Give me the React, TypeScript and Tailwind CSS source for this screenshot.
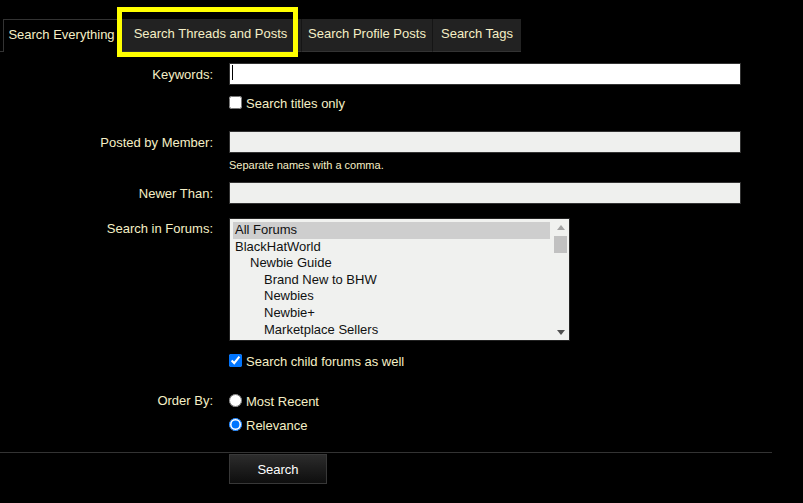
import React, { useState } from "react";

const tabs = [
  { label: "Search Everything", width: "w-[116px]" },
  { label: "Search Threads and Posts", width: "w-[182px]" },
  { label: "Search Profile Posts", width: "w-[131px]" },
  { label: "Search Tags", width: "w-[89px]" },
];

const forums: { name: string; level: number }[] = [
  { name: "All Forums", level: 0 },
  { name: "BlackHatWorld", level: 0 },
  { name: "Newbie Guide", level: 1 },
  { name: "Brand New to BHW", level: 2 },
  { name: "Newbies", level: 2 },
  { name: "Newbie+", level: 2 },
  { name: "Marketplace Sellers", level: 2 },
  { name: "Introductions", level: 1 },
];

const indent: Record<number, string> = {
  0: "pl-[2px]",
  1: "pl-[17px]",
  2: "pl-[31px]",
};

function Row({
  label,
  children,
  className = "",
  labelClass = "",
}: {
  label?: string;
  children: React.ReactNode;
  className?: string;
  labelClass?: string;
}) {
  return (
    <div className={`flex shrink-0 ${className}`}>
      <div className={`w-[213px] shrink-0 text-right ${labelClass}`}>{label}</div>
      <div className="ml-[16px] flex items-center">{children}</div>
    </div>
  );
}

function Arrow({ up, color }: { up?: boolean; color: string }) {
  return (
    <svg width="8" height="5" viewBox="0 0 8 5">
      <polygon points={up ? "0,5 8,5 4,0" : "0,0 8,0 4,5"} fill={color} />
    </svg>
  );
}

function Check({
  type,
  checked,
  onChange,
  text,
  name,
}: {
  type: "checkbox" | "radio";
  checked: boolean;
  onChange: (v: boolean) => void;
  text: string;
  name?: string;
}) {
  return (
    <label className="flex h-[13px] items-center">
      <input
        type={type}
        name={name}
        checked={checked}
        onChange={(e) => onChange(e.target.checked)}
        className="m-0 h-[13px] w-[13px]"
      />
      <span className="ml-[4px] translate-y-[1px] leading-[13px]">{text}</span>
    </label>
  );
}

export default function App() {
  const [active, setActive] = useState(0);
  const [titlesOnly, setTitlesOnly] = useState(false);
  const [childForums, setChildForums] = useState(true);
  const [order, setOrder] = useState("relevance");

  return (
    <div className="min-h-screen bg-black font-['Liberation_Sans',Arial,sans-serif] text-[13px] leading-[15px] text-[#f5efc6]">
      {/* tab strip */}
      <div className="relative flex pt-[19px]">
        <div className="w-[3px] border-b border-[#333]" />
        {tabs.map((tab, i) => (
          <button
            key={tab.label}
            onClick={() => setActive(i)}
            className={`${tab.width} h-[33px] pb-[3px] text-center whitespace-nowrap ${
              i === active
                ? "border-t border-l border-[#333] bg-black"
                : "border-b border-l border-[#333] border-l-[#151515] bg-[#222]"
            }`}
          >
            {tab.label}
          </button>
        ))}
        <div className="pointer-events-none absolute left-[117px] top-[7px] h-[50px] w-[181px] border-[5px] border-[#ffff00]" />
      </div>

      <form className="flex flex-col" onSubmit={(e) => e.preventDefault()}>
        <Row label="Keywords:" className="mt-[11px] h-[22px] items-center">
          <div className="relative">
            <input
              type="text"
              className="block h-[22px] w-[512px] border border-[#333] bg-white px-[2px] text-[13px] text-black outline-none"
            />
            <span className="absolute left-[3px] top-[2px] h-[15px] w-px bg-black" />
          </div>
        </Row>

        <Row className="mt-[11px] h-[13px]">
          <Check type="checkbox" checked={titlesOnly} onChange={setTitlesOnly} text="Search titles only" />
        </Row>

        <Row label="Posted by Member:" className="mt-[22px] h-[22px] items-center">
          <input
            type="text"
            className="block h-[22px] w-[512px] border border-[#333] bg-[#eff0ee] px-[2px] text-[13px] text-black outline-none"
          />
        </Row>
        <Row className="mt-[6px] h-[13px]">
          <span className="text-[11px] leading-[13px]">Separate names with a comma.</span>
        </Row>

        <Row label="Newer Than:" className="mt-[10px] h-[22px] items-center">
          <input
            type="text"
            className="block h-[22px] w-[512px] border border-[#333] bg-[#eff0ee] px-[2px] text-[13px] text-black outline-none"
          />
        </Row>

        <Row label="Search in Forums:" className="mt-[14px] h-[123px]" labelClass="pt-[3px]">
          <div className="flex h-[123px] w-[341px] self-start border border-[#222] bg-[#f0f1ef] text-[#111]">
            <ul className="h-full flex-1 overflow-hidden py-[3px] pl-[3px] pr-[3px]">
              {forums.map((f, i) => (
                <li
                  key={f.name}
                  className={`h-[16.6px] leading-[16.6px] whitespace-nowrap ${indent[f.level]} ${
                    i === 0 ? "bg-[#cecece]" : ""
                  }`}
                >
                  {f.name}
                </li>
              ))}
            </ul>
            <div className="mr-px flex w-[15px] flex-col items-center">
              <div className="flex h-[16px] items-center justify-center">
                <Arrow up color="#a3a3a3" />
              </div>
              <div className="mt-[1px] h-[17px] w-[13px] bg-[#c1c1c1]" />
              <div className="flex-1" />
              <div className="flex h-[16px] items-center justify-center">
                <Arrow color="#505050" />
              </div>
            </div>
          </div>
        </Row>

        <Row className="mt-[13px] h-[13px]">
          <Check type="checkbox" checked={childForums} onChange={setChildForums} text="Search child forums as well" />
        </Row>

        <Row label="Order By:" className="mt-[27px] h-[13px] items-center">
          <Check
            type="radio"
            name="order"
            checked={order === "date"}
            onChange={() => setOrder("date")}
            text="Most Recent"
          />
        </Row>
        <Row className="mt-[11px] h-[13px]">
          <Check
            type="radio"
            name="order"
            checked={order === "relevance"}
            onChange={() => setOrder("relevance")}
            text="Relevance"
          />
        </Row>

        <div className="mt-[21px] w-[772px] border-t border-[#333]" />

        <Row className="mt-px">
          <button
            type="submit"
            className="h-[30px] w-[98px] border border-[#383838] bg-linear-to-b from-[#2c2c2c] to-[#0e0e0e] text-[13px] text-white"
          >
            Search
          </button>
        </Row>
      </form>
    </div>
  );
}
